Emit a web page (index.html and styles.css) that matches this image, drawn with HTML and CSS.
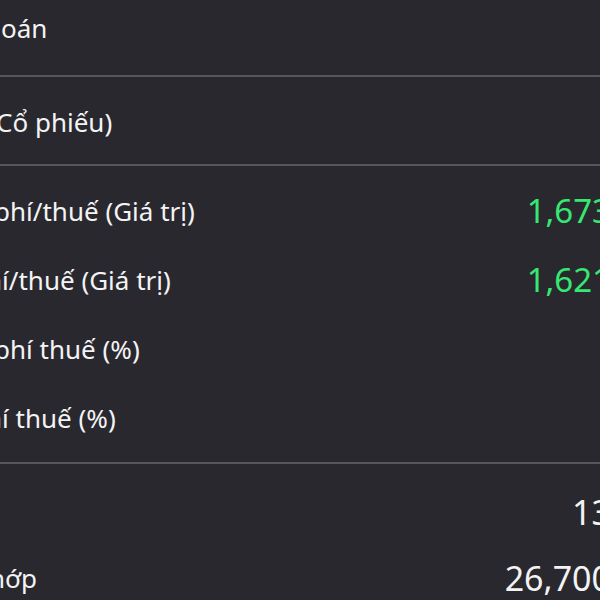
FILE: index.html
```html
<!DOCTYPE html>
<html lang="vi">
<head>
<meta charset="utf-8">
<link rel="stylesheet" href="styles.css">
<title>Chi tiết</title>
</head>
<body>
<div class="screen">
  <section class="group group-top">
    <div class="row"><span class="label shift-0">oán</span></div>
  </section>
  <section class="group group-qty">
    <div class="row"><span class="label shift-c">Cổ phiếu)</span></div>
  </section>
  <section class="group group-pnl">
    <div class="row"><span class="label shift-p">phí/thuế (Giá trị)</span><span class="value up">1,673</span></div>
    <div class="row"><span class="label shift-h">hí/thuế (Giá trị)</span><span class="value up">1,621</span></div>
    <div class="row"><span class="label shift-p">phí thuế (%)</span><span class="value"></span></div>
    <div class="row"><span class="label shift-h">hí thuế (%)</span><span class="value"></span></div>
  </section>
  <section class="group group-order">
    <div class="row row-sm"><span class="label"></span><span class="value big">13</span></div>
    <div class="row row-sm"><span class="label shift-k">hớp</span><span class="value big">26,700</span></div>
  </section>
</div>
</body>
</html>
```
FILE: styles.css
```css
html, body {
  margin: 0;
  padding: 0;
  background: #29282e;
  overflow: hidden;
}
body {
  font-family: "Noto Sans", "DejaVu Sans", sans-serif;
  color: #f3f3f4;
  width: 600px;
  height: 600px;
}
.screen {
  width: 611px;
}
.group {
  border-bottom: 2px solid #57565c;
}
.group-top {
  margin-top: -7px;
  padding-bottom: 13px;
}
.group-qty {
  padding: 10px 0 8px;
}
.group-pnl {
  padding: 10px 0;
}
.group-order {
  padding-top: 15px;
  border-bottom: none;
}
.row {
  height: 69px;
  display: flex;
  align-items: center;
  justify-content: space-between;
}
.row-sm {
  height: 66px;
}
.label {
  font-size: 26px;
  white-space: nowrap;
}
.shift-0 { margin-left: 1px; }
.shift-c { margin-left: -4px; }
.shift-p { margin-left: -6px; }
.shift-h { margin-left: -14px; }
.shift-k { margin-left: -11px; }
.value {
  font-size: 33px;
  white-space: nowrap;
}
.value.up {
  color: #36e872;
}
.value.big {
  font-size: 34px;
}
```
